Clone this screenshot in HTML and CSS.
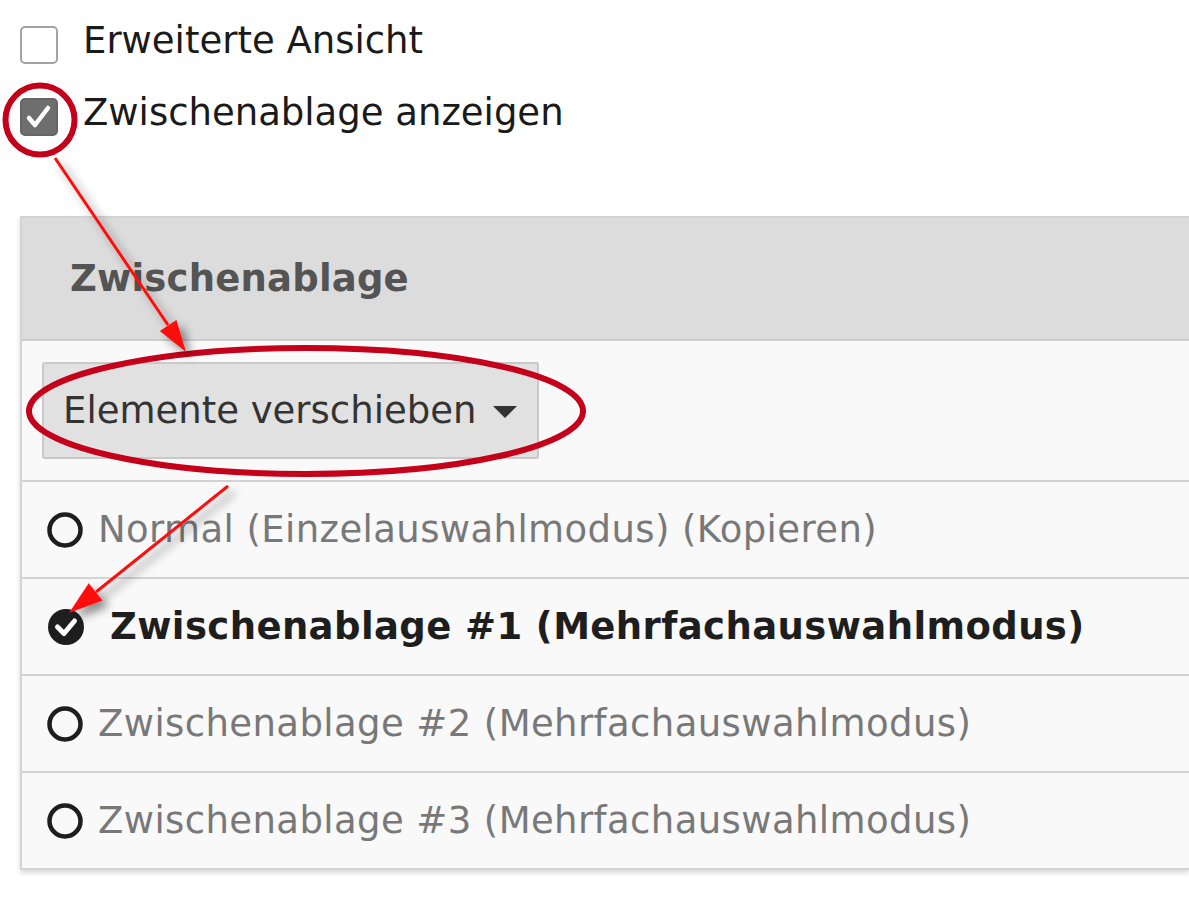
FILE: index.html
```html
<!DOCTYPE html>
<html lang="de">
<head>
<meta charset="utf-8">
<title>Zwischenablage</title>
<link rel="stylesheet" href="styles.css">
</head>
<body>
<div class="page">
  <div class="check-row">
    <span class="box"></span>
    <span class="check-label">Erweiterte Ansicht</span>
  </div>
  <div class="check-row">
    <span class="box checked">
      <svg viewBox="0 0 34 34" width="34" height="34"><polyline points="7,18 13,25 26,8" fill="none" stroke="#fff" stroke-width="4.5" stroke-linecap="round" stroke-linejoin="round"/></svg>
    </span>
    <span class="check-label">Zwischenablage anzeigen</span>
  </div>

  <div class="panel">
    <div class="panel-head">Zwischenablage</div>
    <div class="panel-tools">
      <span class="btn">Elemente verschieben <span class="caret"></span></span>
    </div>
    <ul class="rows">
      <li class="row">
        <svg class="radio" viewBox="0 0 36 36" width="36" height="36"><circle cx="18" cy="18" r="15.5" fill="none" stroke="#1e1e1e" stroke-width="4.5"/></svg>
        <span>Normal (Einzelauswahlmodus) (Kopieren)</span>
      </li>
      <li class="row active">
        <svg class="radio" viewBox="0 0 38 38" width="38" height="38"><circle cx="19" cy="19" r="18" fill="#1e1e1e"/><polyline points="10.5,19 17,25.5 27.5,13" fill="none" stroke="#fff" stroke-width="5" stroke-linecap="round" stroke-linejoin="round"/></svg>
        <span>Zwischenablage #1 (Mehrfachauswahlmodus)</span>
      </li>
      <li class="row">
        <svg class="radio" viewBox="0 0 36 36" width="36" height="36"><circle cx="18" cy="18" r="15.5" fill="none" stroke="#1e1e1e" stroke-width="4.5"/></svg>
        <span>Zwischenablage #2 (Mehrfachauswahlmodus)</span>
      </li>
      <li class="row">
        <svg class="radio" viewBox="0 0 36 36" width="36" height="36"><circle cx="18" cy="18" r="15.5" fill="none" stroke="#1e1e1e" stroke-width="4.5"/></svg>
        <span>Zwischenablage #3 (Mehrfachauswahlmodus)</span>
      </li>
    </ul>
  </div>
</div>

<svg class="annotations" viewBox="0 0 1189 900" width="1189" height="900">
  <defs>
    <filter id="shadow" x="-30%" y="-30%" width="160%" height="160%">
      <feDropShadow dx="6" dy="6" stdDeviation="5" flood-color="#000" flood-opacity="0.45"/>
    </filter>
  </defs>
  <circle cx="40" cy="120" r="34.5" fill="none" stroke="#c4001a" stroke-width="6"/>
  <ellipse cx="306" cy="411" rx="277" ry="63" fill="none" stroke="#c4001a" stroke-width="6"/>
  <g filter="url(#shadow)">
    <line x1="55" y1="158" x2="168" y2="325" stroke="#ff1010" stroke-width="3"/>
    <polygon points="186,352 159.8,331.1 176.4,319.9" fill="#ff1010"/>
  </g>
  <g filter="url(#shadow)">
    <line x1="228" y1="486" x2="96" y2="592" stroke="#ff1010" stroke-width="3"/>
    <polygon points="69,613 88.7,583.2 102.5,600.4" fill="#ff1010"/>
  </g>
</svg>
</body>
</html>
```
FILE: styles.css
```css
html, body {
  margin: 0;
  padding: 0;
}

body {
  position: relative;
  height: 900px;
  overflow: hidden;
  background: #ffffff;
  font-family: "DejaVu Sans", Verdana, sans-serif;
  font-size: 37px;
  color: #222222;
}

.page {
  padding: 26px 0 0 20px;
}

.check-row {
  display: flex;
  align-items: flex-start;
  gap: 25px;
  height: 38px;
}

.check-row + .check-row {
  margin-top: 34px;
}

.check-label {
  line-height: 38px;
  margin-top: -4px;
  color: #1a1a1a;
  white-space: nowrap;
}

.box {
  box-sizing: border-box;
  width: 38px;
  height: 38px;
  border: 2px solid #a3a3a3;
  border-radius: 5px;
  background: #ffffff;
  display: flex;
  align-items: center;
  justify-content: center;
  flex: none;
}

.box.checked {
  background: #6e6e6e;
  border-color: #656565;
}

.panel {
  margin-top: 80px;
  border: 2px solid #d3d3d3;
  border-right: none;
  background: #f9f9f9;
  box-shadow: 0 3px 5px rgba(0, 0, 0, 0.15);
  overflow: hidden;
}

.panel-head {
  box-sizing: border-box;
  height: 123px;
  display: flex;
  align-items: center;
  padding-left: 48px;
  background: #dcdcdc;
  border-bottom: 2px solid #cdcdcd;
  font-weight: bold;
  color: #545454;
  letter-spacing: 0.2px;
}

.panel-tools {
  padding: 21px 20px;
  border-bottom: 2px solid #d3d3d3;
}

.btn {
  box-sizing: border-box;
  display: inline-flex;
  align-items: center;
  gap: 17px;
  height: 97px;
  padding: 0 20px 0 19px;
  border: 2px solid #c9c9c9;
  border-radius: 3px;
  background: #e1e1e1;
  color: #333333;
  white-space: nowrap;
}

.caret {
  width: 0;
  height: 0;
  border-top: 12px solid #333333;
  border-left: 12px solid transparent;
  border-right: 12px solid transparent;
  margin-top: 3px;
}

.rows {
  list-style: none;
  margin: 0;
  padding: 0;
}

.row {
  box-sizing: border-box;
  height: 97px;
  display: flex;
  align-items: center;
  gap: 15px;
  padding-left: 25px;
  border-bottom: 2px solid #d3d3d3;
  color: #787878;
  letter-spacing: 0.4px;
  white-space: nowrap;
}

.row:last-child {
  height: 95px;
  border-bottom: none;
}

.row.active {
  font-weight: bold;
  color: #1e1e1e;
  gap: 25px;
}

.radio {
  flex: none;
}

.annotations {
  position: absolute;
  top: 0;
  left: 0;
  pointer-events: none;
}
```
